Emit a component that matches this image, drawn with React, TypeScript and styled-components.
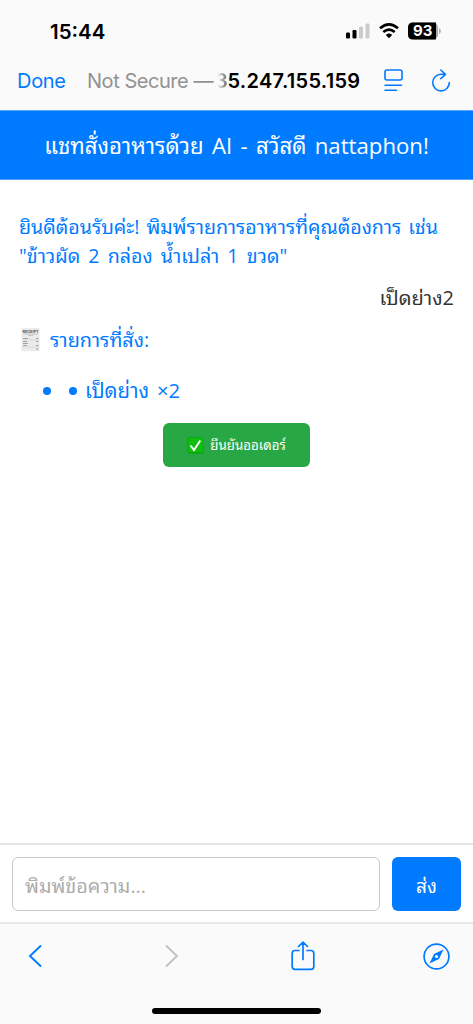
import React from 'react';
import styled, { createGlobalStyle } from 'styled-components';

const blue = '#007bff';
const thai = '"Open Sans", "Noto Sans Thai Looped", "Noto Sans Thai", "Noto Sans", sans-serif';

const Global = createGlobalStyle`
  * { box-sizing: border-box; }
  body { margin: 0; background: #fff; }
  button, input { font: inherit; border: 0; padding: 0; margin: 0; }
`;

const Screen = styled.div`
  width: 473px;
  height: 1024px;
  display: flex;
  flex-direction: column;
  overflow: hidden;
  background: #fff;
  font-family: ${thai};
`;

const StatusBar = styled.div`
  height: 62px;
  flex: none;
  display: flex;
  align-items: center;
  padding: 0 32px 0 50px;
  background: #fafafa;
  font-family: Inter, sans-serif;
`;

const Clock = styled.span`
  flex: 1;
  font-size: 20.5px;
  font-weight: 600;
  color: #000;
`;

const AddressBar = styled.div`
  height: 48px;
  flex: none;
  display: flex;
  align-items: center;
  padding: 0 22px 11px 17px;
  background: #fafafa;
  font-family: Inter, sans-serif;
  font-size: 20px;
  white-space: nowrap;
`;

const Done = styled.span`
  width: 70px;
  color: ${blue};
  letter-spacing: -0.3px;
`;

const Security = styled.span`
  width: 128px;
  color: #929292;
  letter-spacing: -0.45px;
`;

const Host = styled.span`
  width: 168px;
  font-weight: 600;
  color: #000;
  letter-spacing: 0.3px;
`;

const Faded = styled.span`
  background: linear-gradient(90deg, #fafafa 20%, #666);
  background-clip: text;
  color: transparent;
  letter-spacing: -0.3px;
`;

const Title = styled.header`
  height: 70px;
  flex: none;
  display: flex;
  align-items: center;
  justify-content: center;
  padding-bottom: 2px;
  background: ${blue};
  border-top: 1px solid #58a5f8;
  border-bottom: 1px solid #4da3ff;
  color: #fff;
  font-size: 22.2px;
  word-spacing: 2.6px;
  white-space: nowrap;
`;

const Chat = styled.main`
  flex: 1;
  min-height: 0;
  padding: 32px 19px 0;
  font-size: 19.6px;
  line-height: 29px;
  color: ${blue};
  word-spacing: 2.6px;
  white-space: nowrap;
`;

const Line = styled.div<{ $gap?: number }>`
  height: 29px;
  word-spacing: ${p => p.$gap ?? 2}px;
`;

const UserMessage = styled.div`
  margin-top: 13px;
  height: 29px;
  text-align: right;
  font-size: 20px;
  color: #333;
`;

const OrderHeading = styled.div`
  margin-top: 13px;
  height: 29px;
  display: flex;
  align-items: center;
  gap: 9px;
  font-size: 19.8px;
`;

const OrderItems = styled.ul`
  list-style: none;
  margin: 22px 0 0;
  padding: 0 0 0 24px;
`;

const OrderItem = styled.li`
  display: flex;
  align-items: center;
  height: 29px;
  font-size: 20.3px;
`;

const Dot = styled.i<{ $gap: number }>`
  width: 8px;
  height: 8px;
  border-radius: 50%;
  background: ${blue};
  margin-right: ${p => p.$gap}px;
`;

const Confirm = styled.button`
  display: flex;
  align-items: center;
  justify-content: center;
  gap: 6px;
  width: 147px;
  height: 44px;
  margin: 18px auto 0;
  border-radius: 6px;
  background: #28a745;
  color: #fff;
  font-size: 13.3px;
`;

const Composer = styled.form`
  height: 79px;
  flex: none;
  display: flex;
  gap: 12px;
  padding: 12px 12px 0;
  border-top: 2px solid #e3e3e3;
  background: #fff;
`;

const Field = styled.input`
  flex: 1;
  min-width: 0;
  height: 54px;
  padding: 3px 12px 0;
  border: 1.5px solid #ccc;
  border-radius: 6px;
  font-size: 19.8px;
  &::placeholder { color: #adadad; opacity: 1; }
`;

const Send = styled.button`
  width: 69px;
  height: 54px;
  padding-top: 1px;
  border-radius: 6px;
  background: ${blue};
  color: #fff;
  font-size: 19px;
`;

const Toolbar = styled.nav`
  height: 102px;
  flex: none;
  display: flex;
  flex-direction: column;
  align-items: center;
  justify-content: space-between;
  padding: 17px 23px 10px 28px;
  border-top: 2px solid #e9e9e9;
  background: #fafafa;
`;

const Tools = styled.div`
  width: 100%;
  display: grid;
  grid-template-columns: 137px 126px 1fr auto;
  align-items: center;
`;

const HomeIndicator = styled.div`
  width: 169px;
  height: 6px;
  margin-right: 5px;
  border-radius: 3px;
  background: #000;
`;

const Icon = styled.svg`
  display: block;
  flex: none;
  overflow: visible;
`;

const Signal = () => (
  <Icon width="24" height="16" viewBox="0 0 24 16">
    <rect x="0" y="9.5" width="4" height="6" rx="1.2" />
    <rect x="6.5" y="7" width="4" height="8.5" rx="1.2" />
    <rect x="13" y="3.5" width="4" height="12" rx="1.2" fill="#cbcbcb" />
    <rect x="19.5" y="0.5" width="4" height="15" rx="1.2" fill="#cbcbcb" />
  </Icon>
);

const Wifi = () => (
  <Icon width="20" height="16" viewBox="0 0 20 16" fill="none" stroke="#000" strokeWidth="2.6">
    <path d="M1 5.3Q10-2.6 19 5.3M4.3 9Q10 4.1 15.7 9" />
    <path d="M10 15.2L6.8 12Q10 9.2 13.2 12Z" fill="#000" stroke="none" />
  </Icon>
);

const Battery = () => (
  <Icon width="33" height="18" viewBox="0 0 33 18">
    <rect x="0" y="0.5" width="30" height="17" rx="5" fill="#aaa" />
    <path d="M5 .5H28V17.5H5Q0 17.5 0 12.5V5.5Q0 .5 5 .5Z" />
    <path d="M31 6Q33 7 33 9T31 12Z" fill="#b5b5b5" />
    <text x="14.7" y="14.4" textAnchor="middle" fill="#fff" fontFamily="Inter" fontWeight="700" fontSize="15">93</text>
  </Icon>
);

const StatusIcons = styled.div`
  display: flex;
  align-items: center;
  gap: 9px;
`;

const Reader = () => (
  <Icon width="19" height="23" viewBox="0 0 19 23" fill="none" stroke={blue} strokeWidth="1.6" strokeLinecap="round">
    <rect x="1" y="1" width="17" height="10" rx="2" />
    <path d="M1 16.3H17.5M1 21.3H12.5" />
  </Icon>
);

const Reload = () => (
  <Icon width="19" height="23" viewBox="0 0 19 23" fill="none" stroke={blue} strokeWidth="1.6" strokeLinecap="round" strokeLinejoin="round">
    <path d="M13.5 5.3H9A8.3 8.3 0 1 0 17.3 13.6M8.8 1L13.5 5.3L8.8 9.6" />
  </Icon>
);

const ReceiptIcon = () => (
  <Icon width="22" height="26" viewBox="0 0 22 26">
    <path d="M2.5 1H20.5V24.5L19 23.7L17.5 24.5L16 23.7L14.5 24.5L13 23.7L11.5 24.5L10 23.7L8.5 24.5L7 23.7L5.5 24.5L4 23.7L2.5 24.5Z" fill="#ebebeb" />
    <text x="11.5" y="5.6" textAnchor="middle" fontFamily="Inter" fontSize="3.8" fontWeight="700" fill="#555">RECEIPT</text>
    <path d="M4 7H19M9 8.5H14" stroke="#aaa" strokeWidth=".6" />
    <path d="M4 11.5H9M17 11.5H19.5M4 14.5H8M17 14.5H19.5M4 16.5H9M17 18.5H19.5M4 18.5H8M17 22H19.5" stroke="#999" strokeWidth=".9" />
    <path d="M3.5 13H20M3.5 20H20" stroke="#c5c5c5" strokeWidth=".5" />
  </Icon>
);

const CheckIcon = () => (
  <Icon width="17" height="17" viewBox="0 0 17 17">
    <rect x=".3" y=".3" width="16.4" height="16.4" rx="2.5" fill="#08a90b" />
    <rect x="1.2" y="1" width="14.6" height="14" rx="2" fill="#0fbe10" />
    <path d="M3.5 8.5L7 13L13.3 3.5" fill="none" stroke="#fff" strokeWidth="1.9" />
  </Icon>
);

const Share = () => (
  <Icon width="24" height="30" viewBox="0 0 24 30" fill="none" stroke={blue} strokeWidth="1.7" strokeLinecap="round" strokeLinejoin="round">
    <path d="M8 9.5H4Q1.2 9.5 1.2 12.3V25.5Q1.2 28.3 4 28.3H20Q22.8 28.3 22.8 25.5V12.3Q22.8 9.5 20 9.5H16M12 18.5V1.3M7.5 5.5L12 1.2L16.5 5.5" />
  </Icon>
);

const Compass = () => (
  <Icon width="27" height="27" viewBox="0 0 27 27">
    <circle cx="13.5" cy="13.5" r="12.4" fill="none" stroke={blue} strokeWidth="1.7" />
    <path d="M20.5 6.5L16 16L6.5 20.5L11 11Z" fill={blue} />
    <circle cx="13.5" cy="13.5" r="1.6" fill="#fafafa" />
  </Icon>
);

const Chevron = ({ next = false }: { next?: boolean }) => (
  <Icon width="14" height="24" viewBox="0 0 14 24" fill="none" stroke={next ? '#c2c2c2' : blue} strokeWidth="1.9" strokeLinecap="round">
    <path d={next ? 'M1.5 2L12 12L1.5 22' : 'M12.5 2L2 12L12.5 22'} />
  </Icon>
);

const PageActions = styled.div`
  display: flex;
  gap: 29px;
  margin-left: auto;
`;

export default function App() {
  return (
    <Screen>
      <Global />
      <StatusBar>
        <Clock>15:44</Clock>
        <StatusIcons><Signal /><Wifi /><Battery /></StatusIcons>
      </StatusBar>
      <AddressBar>
        <Done>Done</Done>
        <Security>Not Secure —</Security>
        <Host><Faded>3</Faded>5.247.155.159</Host>
        <PageActions><Reader /><Reload /></PageActions>
      </AddressBar>
      <Title>แชทสั่งอาหารด้วย AI - สวัสดี nattaphon!</Title>
      <Chat>
        <Line>ยินดีต้อนรับค่ะ! พิมพ์รายการอาหารที่คุณต้องการ เช่น</Line>
        <Line $gap={3}>"ข้าวผัด 2 กล่อง น้ำเปล่า 1 ขวด"</Line>
        <UserMessage>เป็ดย่าง2</UserMessage>
        <OrderHeading><ReceiptIcon />รายการที่สั่ง:</OrderHeading>
        <OrderItems>
          <OrderItem><Dot $gap={18} /><Dot $gap={8} />เป็ดย่าง ×2</OrderItem>
        </OrderItems>
        <Confirm><CheckIcon />ยืนยันออเดอร์</Confirm>
      </Chat>
      <Composer>
        <Field placeholder="พิมพ์ข้อความ..." />
        <Send type="button">ส่ง</Send>
      </Composer>
      <Toolbar>
        <Tools><Chevron /><Chevron next /><Share /><Compass /></Tools>
        <HomeIndicator />
      </Toolbar>
    </Screen>
  );
}
